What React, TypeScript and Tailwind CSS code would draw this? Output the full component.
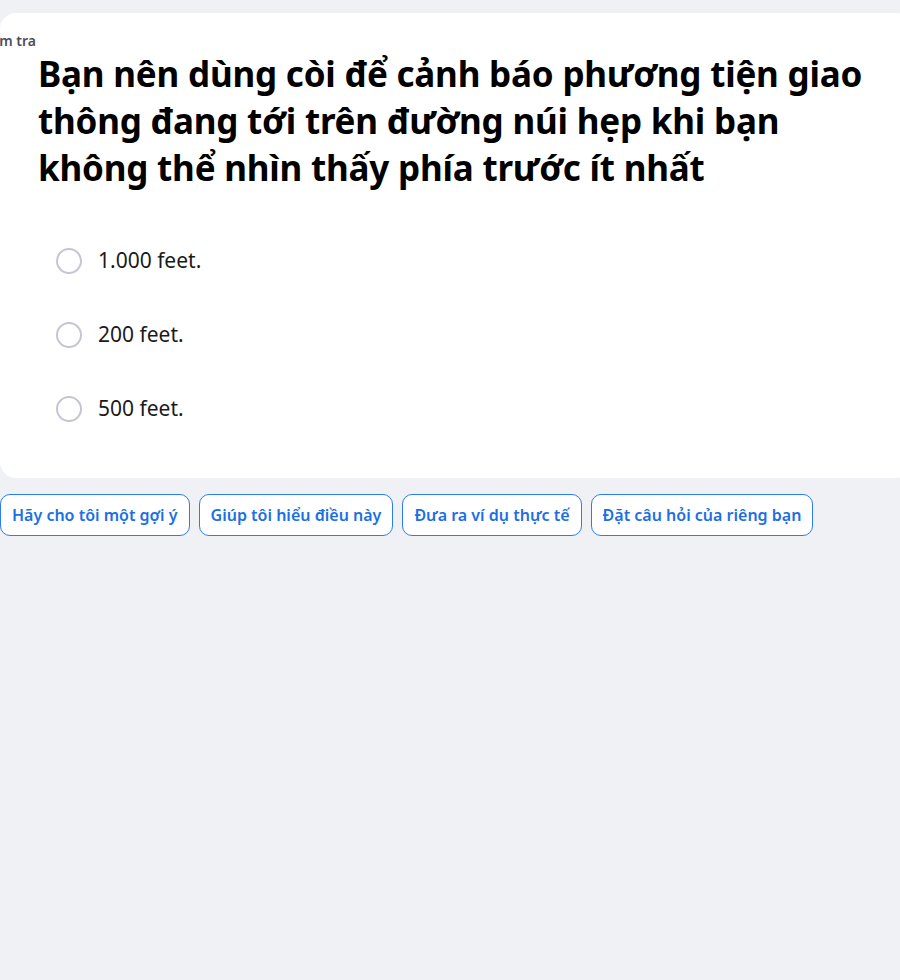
import React from "react";

const font = { fontFamily: '"Noto Sans", "Open Sans", sans-serif' };

export default function App() {
  const options = ["1.000 feet.", "200 feet.", "500 feet."];
  const chips = [
    "Hãy cho tôi một gợi ý",
    "Giúp tôi hiểu điều này",
    "Đưa ra ví dụ thực tế",
    "Đặt câu hỏi của riêng bạn",
  ];
  return (
    <div className="w-[900px] h-[980px] overflow-hidden bg-[#f0f1f5]" style={font}>
      <div className="pt-[13px]">
        <div className="w-[912px] bg-white rounded-2xl pt-[18px] pb-[56px]">
          <div className="-ml-[22px] text-[14px] leading-[20px] font-semibold text-[#4d4d5c]">Kiểm tra</div>
          <h1 className="ml-[38px] -mt-[1px] w-[840px] text-[35px] leading-[47px] font-bold text-black tracking-[-0.2px]">
            Bạn nên dùng còi để cảnh báo phương tiện giao thông đang tới trên đường núi hẹp khi bạn không thể nhìn thấy phía trước ít nhất
          </h1>
          <div className="mt-[57px] ml-[56px] flex flex-col gap-[48px]">
            {options.map((o) => (
              <div key={o} className="flex items-center gap-[16px] h-[26px]">
                <span className="w-[26px] h-[26px] rounded-full border-2 border-[#c5c6d3] bg-white shrink-0" />
                <span className="text-[21px] text-[#1a1a1a]">{o}</span>
              </div>
            ))}
          </div>
        </div>
        <div className="mt-[16px] flex gap-[9px]">
          {chips.map((c) => (
            <button
              key={c}
              className="h-[42px] px-[11px] rounded-[10px] border border-[#2a7cf0] bg-white text-[#1c6fe3] text-[16px] font-semibold"
            >
              {c}
            </button>
          ))}
        </div>
      </div>
    </div>
  );
}
